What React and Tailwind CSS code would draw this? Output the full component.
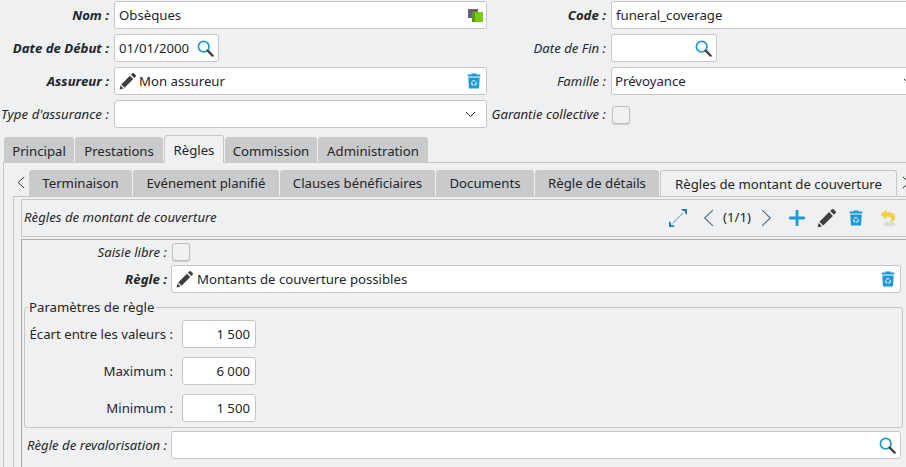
import React from 'react';

const fieldStyle = 'h-[28px] shrink-0 bg-white border border-[#c4c6c8] rounded-[3px] flex items-center text-[13.2px] text-[#232629]';
const labelStyle = 'shrink-0 text-[13.2px] text-[#232629] text-right whitespace-nowrap pt-[2px]';

const Txt = ({ children }) => <span className="block pt-[2px]">{children}</span>;

const SearchIcon = () => (
  <svg width="17" height="17" viewBox="0 0 17 17" fill="none">
    <circle cx="6.7" cy="6.7" r="5.3" stroke="#1b9ad6" strokeWidth="1.7" fill="#fff" />
    <path d="M10.7 10.7L15.6 15.6" stroke="#444" strokeWidth="2.4" strokeLinecap="round" />
  </svg>
);

const PencilIcon = ({ size = 18 }) => (
  <svg width={size} height={size} viewBox="0 0 18 18">
    <path d="M13.4 1.2a1 1 0 0 1 1.4 0l2 2a1 1 0 0 1 0 1.4l-1.5 1.5-3.4-3.4zM10.9 3.7l3.4 3.4L5.6 15.8 2.2 12.4zM1.5 13.4l3.1 3.1L.6 17.4z" fill="#3f3f3f" />
  </svg>
);

const TrashIcon = () => (
  <svg width="14" height="16" viewBox="0 0 14 16">
    <path d="M4.5 1.6V.6h5v1h3.8v1.9H.7V1.6z" fill="#1b9ad6" />
    <path d="M1.3 4.4h11.4l-.7 11.2H2z" fill="#1b9ad6" />
    <circle cx="7" cy="10" r="2.3" fill="none" stroke="#fff" strokeWidth="1.1" strokeDasharray="3 1" />
  </svg>
);

const PlusIcon = () => (
  <svg width="16" height="16" viewBox="0 0 16 16">
    <path d="M8 1v14M1 8h14" stroke="#1b9ad6" strokeWidth="2.8" strokeLinecap="round" />
  </svg>
);

const UndoIcon = () => (
  <svg width="16" height="18" viewBox="0 0 16 18">
    <ellipse cx="9.500" cy="15" rx="6" ry="2.400" fill="#dcdcdc" />
    <path d="M6.500 0.500L0.500 5.500l6 5V7.600c2.800-.2 4.800.6 4.800 3 0 1-.3 2-1 2.900 3-.8 5-2.800 5-5.500 0-3.400-3.400-4.900-8.800-4.700z" fill="#f0cf4a" />
  </svg>
);

const ExpandIcon = () => (
  <svg width="20" height="20" viewBox="0 0 20 20">
    <path d="M5 15L15 5" stroke="#8fb2c6" strokeWidth="1.1" />
    <path d="M13 1h6v6zM1 13v6h6z" fill="#1f7fae" />
    <path d="M15 3h2v2h-2zM3 15h2v2H3z" fill="#d7e6ee" />
  </svg>
);

const Chevron = ({ dir, height = 16, width = 10, color = '#232629', sw = 1 }) => (
  <svg width={width} height={height} viewBox="0 0 10 16" fill="none" preserveAspectRatio="none">
    <path d={dir === 'left' ? 'M9 1L1.500 8 9 15' : 'M1 1l7.500 7L1 15'} stroke={color} strokeWidth={sw} />
  </svg>
);

const SelectArrow = () => (
  <svg width="11" height="7" viewBox="0 0 11 7" fill="none">
    <path d="M1 1l4.500 4.500L10 1" stroke="#232629" strokeWidth="1" />
  </svg>
);

const TranslateIcon = () => (
  <svg width="15" height="15" viewBox="0 0 15 15">
    <rect x="0" y="1" width="10" height="9" fill="#6d5a86" />
    <rect x="4" y="4" width="11" height="10" fill="#78c81e" />
    <rect x="4" y="4" width="3" height="10" fill="#5c9a1a" />
  </svg>
);

const Checkbox = () => (
  <div className="w-[18px] h-[18px] bg-[#eff0f1] border border-[#bcbebf] rounded-[3px] shadow-[0_1px_1px_rgba(0,0,0,0.15)]" />
);

const MainTab = ({ label, active, width }) => (
  <div
    className={active
      ? 'h-[28px] bg-[#eff0f1] border border-b-0 border-[#c4c6c8] rounded-t-[3px] flex items-center justify-center text-[13.2px] text-[#232629] pt-[2px]'
      : 'h-[26px] mt-[2px] bg-[#c9cacb] rounded-t-[3px] flex items-center justify-center text-[13.2px] text-[#232629] pt-[4px]'}
    style={{ width }}
  >
    {label}
  </div>
);

const mainTabs = [
  { label: 'Principal', width: 70 },
  { label: 'Prestations', width: 88 },
  { label: 'Règles', width: 60, active: true },
  { label: 'Commission', width: 92 },
  { label: 'Administration', width: 110 },
];

const subTabs = [
  { label: 'Terminaison', width: 103 },
  { label: 'Evénement planifié', width: 146 },
  { label: 'Clauses bénéficiaires', width: 155 },
  { label: 'Documents', width: 98 },
  { label: 'Règle de détails', width: 124 },
  { label: 'Règles de montant de couverture', width: 237, active: true },
];

const ParamRow = ({ label, value }) => (
  <div className="flex items-center h-[28px]">
    <div className="w-[145px] shrink-0 text-right text-[13.2px] text-[#232629] whitespace-nowrap pt-[2px]">{label}</div>
    <div className={`${fieldStyle} w-[74px] ml-[9px] justify-end pr-[5px]`}><Txt>{value}</Txt></div>
  </div>
);

export default function App() {
  return (
    <div className="w-[906px] h-[467px] overflow-hidden bg-[#eff0f1] text-[#232629] pt-px" style={{ fontFamily: '"Noto Sans", sans-serif' }}>
      {/* top form */}
      <div className="flex flex-col gap-[5px]">
        <div className="flex items-center">
          <div className={`${labelStyle} w-[109px] font-bold italic`}>Nom :</div>
          <div className={`${fieldStyle} w-[373px] ml-[5px] pl-[4px] pr-[3px] justify-between`}>
            <Txt>Obsèques</Txt>
            <TranslateIcon />
          </div>
          <div className={`${labelStyle} w-[119px] font-bold italic`}>Code :</div>
          <div className={`${fieldStyle} w-[320px] ml-[5px] pl-[4px]`}><Txt>funeral_coverage</Txt></div>
        </div>
        <div className="flex items-center">
          <div className={`${labelStyle} w-[109px] font-bold italic`}>Date de Début :</div>
          <div className={`${fieldStyle} w-[105px] ml-[5px] pl-[4px] pr-[4px] justify-between`}>
            <Txt>01/01/2000</Txt>
            <SearchIcon />
          </div>
          <div className={`${labelStyle} w-[387px] italic`}>Date de Fin :</div>
          <div className={`${fieldStyle} w-[106px] ml-[5px] pr-[4px] justify-end`}>
            <SearchIcon />
          </div>
        </div>
        <div className="flex items-center">
          <div className={`${labelStyle} w-[109px] font-bold italic`}>Assureur :</div>
          <div className={`${fieldStyle} w-[373px] ml-[5px] pl-[4px] pr-[5px] justify-between`}>
            <div className="flex items-center gap-[2px]">
              <PencilIcon />
              <Txt>Mon assureur</Txt>
            </div>
            <TrashIcon />
          </div>
          <div className={`${labelStyle} w-[119px] italic`}>Famille :</div>
          <div className={`${fieldStyle} w-[320px] ml-[5px] pl-[3px] justify-between pr-[16px]`}>
            <Txt>Prévoyance</Txt>
            <SelectArrow />
          </div>
        </div>
        <div className="flex items-center">
          <div className={`${labelStyle} w-[109px] italic tracking-[0.1px]`}>Type d'assurance :</div>
          <div className={`${fieldStyle} w-[373px] ml-[5px] pr-[10px] justify-end`}>
            <SelectArrow />
          </div>
          <div className={`${labelStyle} w-[119px] italic`}>Garantie collective :</div>
          <div className="ml-[6px] mt-[2px]"><Checkbox /></div>
        </div>
      </div>

      {/* main tabs */}
      <div className="flex gap-px mt-[7px] ml-[4px] h-[28px]">
        {mainTabs.map((tab) => <MainTab key={tab.label} {...tab} />)}
      </div>

      <div className="ml-[3px] border-t border-l border-[#c4c6c8] -mt-px pt-[7px]">
        {/* sub tabs */}
        <div className="flex items-end h-[26px]">
          <div className="w-[25px] shrink-0 flex justify-end pr-[4px] pb-[7px]">
            <Chevron dir="left" height={13} width={8} sw={1.2} />
          </div>
          <div className="flex gap-px shrink-0">
            {subTabs.map((tab) => (
              <div
                key={tab.label}
                className={tab.active
                  ? 'h-[26px] bg-[#eff0f1] border border-b-0 border-[#c4c6c8] rounded-t-[3px] flex items-center justify-center text-[13.2px] shrink-0 pt-[2px]'
                  : 'h-[26px] bg-[#c9cacb] rounded-t-[3px] flex items-center justify-center text-[13.2px] shrink-0 pt-[2px]'}
                style={{ width: tab.width }}
              >
                {tab.label}
              </div>
            ))}
          </div>
          <div className="ml-[5px] pb-[7px] shrink-0"><Chevron dir="right" height={13} width={8} sw={1.2} /></div>
        </div>

        <div className="ml-[9px] border-t border-l border-[#c4c6c8] pl-[7px] pt-[2px] h-[280px]">
          {/* toolbar */}
          <div className="h-[38px] w-[890px] bg-[#eff0f1] border border-[#c4c6c8] border-r-0 rounded-tl-[2px] flex items-center pl-[2px]">
            <span className="text-[13.2px] italic whitespace-nowrap">Règles de montant de couverture</span>
            <div className="ml-auto flex items-center mr-[15px]">
              <ExpandIcon />
              <div className="ml-[15px]"><Chevron dir="left" height={18} width={11} color="#4a6d85" /></div>
              <span className="text-[13.2px] ml-[9px] mr-[10px]">(1/1)</span>
              <Chevron dir="right" height={18} width={11} color="#4a6d85" />
              <div className="ml-[17px]"><PlusIcon /></div>
              <div className="ml-[12px]"><PencilIcon size={20} /></div>
              <div className="ml-[12px]"><TrashIcon /></div>
              <div className="ml-[17px]"><UndoIcon /></div>
            </div>
          </div>

          {/* detail panel */}
          <div className="mt-[2px] border-t border-l border-[#a9abad] pt-[3px] h-[240px]">
            <div className="flex items-center h-[18px]">
              <div className={`${labelStyle} w-[145px] italic`}>Saisie libre :</div>
              <div className="ml-[5px]"><Checkbox /></div>
            </div>
            <div className="flex items-center mt-[4px]">
              <div className={`${labelStyle} w-[145px] font-bold italic`}>Règle :</div>
              <div className={`${fieldStyle} w-[730px] ml-[4px] pl-[4px] pr-[5px] justify-between`}>
                <div className="flex items-center gap-[3px]">
                  <PencilIcon />
                  <Txt>Montants de couverture possibles</Txt>
                </div>
                <TrashIcon />
              </div>
            </div>

            {/* Paramètres de règle */}
            <div className="relative mt-[14px] ml-[2px] w-[879px] h-[121px] border border-[#c4c6c8] rounded-[3px] pt-[12px] pl-[3px] flex flex-col gap-[9px]">
              <span className="absolute -top-[11px] left-[3px] bg-[#eff0f1] pl-px pr-[2px] text-[13.2px] leading-[20px]">Paramètres de règle</span>
              <ParamRow label="Écart entre les valeurs :" value="1 500" />
              <ParamRow label="Maximum :" value="6 000" />
              <ParamRow label="Minimum :" value="1 500" />
            </div>

            <div className="flex items-center mt-[3px]">
              <div className={`${labelStyle} w-[145px] italic`}>Règle de revalorisation :</div>
              <div className={`${fieldStyle} w-[730px] ml-[4px] pr-[4px] justify-end`}>
                <SearchIcon />
              </div>
            </div>
          </div>
        </div>
      </div>
    </div>
  );
}
